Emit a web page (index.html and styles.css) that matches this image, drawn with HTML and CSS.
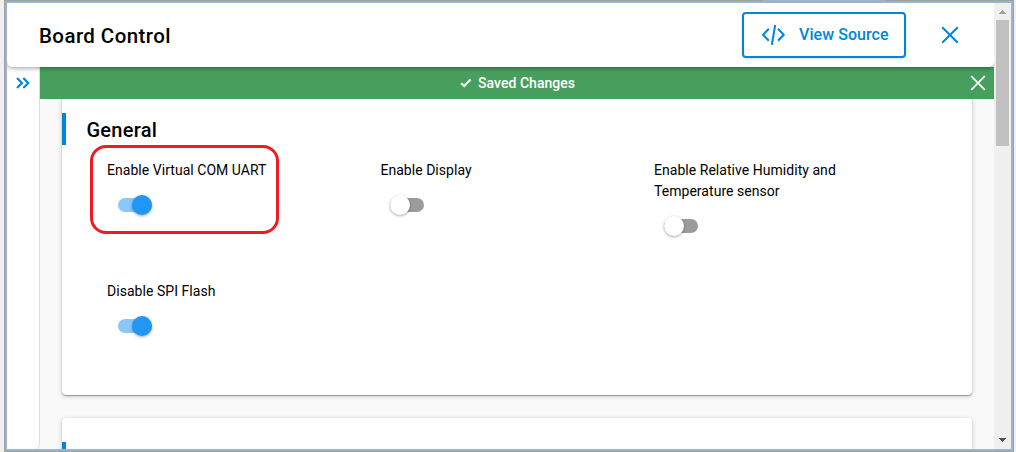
FILE: index.html
```html
<!DOCTYPE html>
<html lang="en">
<head>
<meta charset="utf-8">
<title>Board Control</title>
<link rel="stylesheet" href="styles.css">
</head>
<body>
<div class="frame">
  <div class="window">
    <div class="view">
      <header class="header">
        <h1 class="title">Board Control</h1>
        <button class="source">
          <svg class="code-icon" width="24" height="22" viewBox="0 0 24 22"><path d="M7.8 4.8 2.1 10.8l5.7 6M17 4.8l5.7 6-5.7 6M14.2 1 10.8 20.8"/></svg>
          <span>View Source</span>
        </button>
        <button class="close" aria-label="Close"><svg width="18" height="18" viewBox="0 0 18 18"><path d="m1.2 1.2 15.6 15.6M16.8 1.2 1.2 16.8"/></svg></button>
      </header>
      <div class="body">
        <aside class="sidebar"><svg width="14" height="12" viewBox="0 0 14 12"><path d="M1 1l5 5-5 5M7.3 1l5 5-5 5"/></svg></aside>
        <main class="main">
          <div class="notice">
            <svg class="check" width="12" height="10" viewBox="0 0 12 10"><path d="m1.2 5.2 3 2.8 6.4-6.5"/></svg>
            <span class="notice-text">Saved Changes</span>
            <svg class="dismiss" width="16" height="16" viewBox="0 0 16 16"><path d="m1.2 1.2 13.6 13.6M14.8 1.2 1.2 14.8"/></svg>
          </div>
          <div class="content">
            <section class="card general">
              <h2 class="section-title">General</h2>
              <div class="options">
                <div class="option"><div class="label">Enable Virtual COM UART</div><div class="switch on"><i class="knob"></i></div><div class="highlight"></div></div>
                <div class="option"><div class="label">Enable Display</div><div class="switch"><i class="knob"></i></div></div>
                <div class="option"><div class="label">Enable Relative Humidity and Temperature sensor</div><div class="switch"><i class="knob"></i></div></div>
                <div class="option"><div class="label">Disable SPI Flash</div><div class="switch on"><i class="knob"></i></div></div>
              </div>
            </section>
            <section class="card next"><div class="marker"></div></section>
          </div>
        </main>
      </div>
    </div>
    <div class="scrollbar">
      <svg width="17" height="17" viewBox="0 0 17 17" shape-rendering="crispEdges"><path fill="#a0a0a0" d="M8 7h1v1h1v1h1v1h1v1H5v-1h1V9h1V8h1z"/></svg>
      <div class="thumb"></div>
      <svg class="down" width="17" height="17" viewBox="0 0 17 17" shape-rendering="crispEdges"><path fill="#505050" d="M5 6h7v1h-1v1h-1v1H9v1H8V9H7V8H6V7H5z"/></svg>
    </div>
  </div>
</div>
</body>
</html>
```
FILE: styles.css
```css
* { box-sizing: border-box; }
body { margin: 0; width: 1016px; height: 452px; overflow: hidden; background: #f0f0f0; font-family: Roboto, sans-serif; color: #000; }
h1, h2 { margin: 0; font-weight: 500; }
svg { display: block; flex: none; }
svg path { stroke-linejoin: miter; }
.frame { width: 1010px; height: 452px; margin-left: 4px; padding: 1px; background: linear-gradient(#99b4d1, #99b4d1) 759px 0 / 122px 1px no-repeat #a0a0a0; }
.window { display: flex; height: 450px; border: 2px solid #99b4d1; background: #f9f9f9; }
.view { display: flex; flex-direction: column; width: 987px; height: 446px; overflow: hidden; }
.header { position: relative; z-index: 2; display: flex; align-items: center; flex: none; height: 64px; padding: 0 35px 0 32px; background: #fff; border-radius: 0 0 5px 5px; box-shadow: 0 1px 5px rgba(0,0,0,.4); }
.title { flex: 1; font-size: 20.5px; line-height: 24px; letter-spacing: .42px; padding-top: 1px; }
button { font: inherit; background: none; border: 0; padding: 0; color: #0086d9; }
.source { display: flex; align-items: center; width: 164px; height: 46px; padding: 0 0 2px 18px; gap: 14px; border: 2px solid #0086d9; border-radius: 4px; font-size: 16px; font-weight: 500; letter-spacing: .06px; box-shadow: 0 1px 3px rgba(0,0,0,.15); }
.code-icon { margin-left: -1px; margin-top: 1px; }
.code-icon path, .close path, .sidebar path { fill: none; stroke: #0086d9; stroke-width: 2; }
.close { margin-left: 35px; }
.body { display: flex; flex: 1; min-height: 0; }
.sidebar { width: 33px; flex: none; padding: 10px 0 0 9px; background: #fff; border-right: 1px solid #ddd; border-bottom-right-radius: 5px; }
.sidebar path { stroke-width: 2.1; }
.main { flex: 1; min-width: 0; }
.notice { position: relative; z-index: 1; display: flex; align-items: center; height: 32px; padding: 0 8px 0 420px; gap: 6px; background: #479f5e; color: #fff; font-size: 14px; font-weight: 500; line-height: 20px; letter-spacing: .04px; }
.notice path { fill: none; stroke: #fff; stroke-width: 2; }
.notice-text { flex: 1; }
.notice .dismiss path { stroke-width: 1.7; }
.content { padding: 0 22px; }
.card { background: #fff; border-radius: 4px; box-shadow: 0 1px 5px rgba(0,0,0,.2), 0 1px 1px rgba(0,0,0,.32); }
.general { height: 300px; margin-top: -4px; padding-top: 18px; }
.section-title { height: 32px; border-left: 4px solid #0086d9; padding-left: 20.5px; font-size: 20px; line-height: 34px; letter-spacing: .25px; }
.options { display: grid; grid-template-columns: 273.4px 273.6px 273px; grid-auto-rows: 121px; padding: 15px 0 0 45px; }
.option { position: relative; }
.label { width: 205px; font-size: 14px; line-height: 21px; letter-spacing: .04px; }
.switch { display: flex; align-items: center; width: 34px; height: 14px; margin: 17px 0 0 10px; border-radius: 7px; background: #9b9b9b; }
.knob { width: 20px; height: 20px; flex: none; border-radius: 50%; background: #fff; box-shadow: 0 1px 3px rgba(0,0,0,.35); }
.on { margin-left: 11px; background: #8ac7fa; }
.on .knob { margin-left: 14px; background: #2196f3; }
.highlight { position: absolute; left: -17px; top: -15px; width: 189px; height: 89px; border: 3px solid #ed1c24; border-radius: 16px; }
.next { height: 80px; margin-top: 23px; padding-top: 24px; }
.marker { width: 4px; height: 32px; background: #0086d9; }
.scrollbar { display: flex; flex-direction: column; width: 17px; background: #f0f0f0; }
.thumb { width: 13px; height: 126px; margin-left: 2px; background: #c1c1c1; }
.down { margin-top: auto; }
```
